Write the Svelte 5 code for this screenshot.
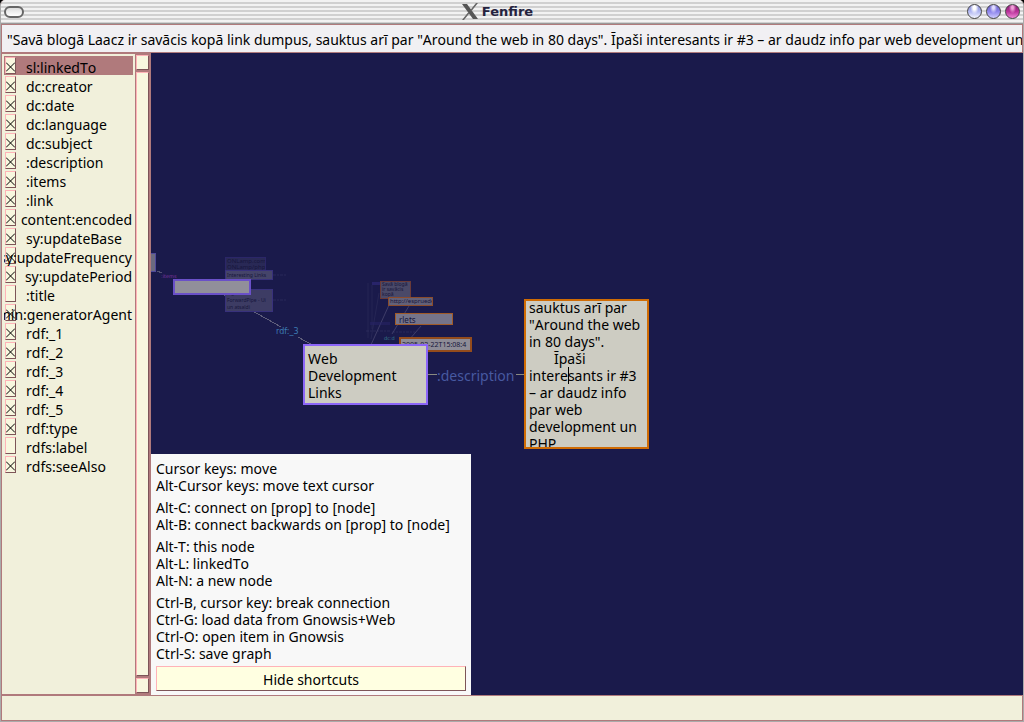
<script>
  const properties = [
    ['sl:linkedTo', true],
    ['dc:creator', true],
    ['dc:date', true],
    ['dc:language', true],
    ['dc:subject', true],
    [':description', true],
    [':items', true],
    [':link', true],
    ['content:encoded', true],
    ['sy:updateBase', true],
    ['sy:updateFrequency', true],
    ['sy:updatePeriod', true],
    [':title', false],
    ['admin:generatorAgent', true],
    ['rdf:_1', true],
    ['rdf:_2', true],
    ['rdf:_3', true],
    ['rdf:_4', true],
    ['rdf:_5', true],
    ['rdf:type', true],
    ['rdfs:label', false],
    ['rdfs:seeAlso', true]
  ];
  const shortcuts = [
    ['Cursor keys: move', 'Alt-Cursor keys: move text cursor'],
    ['Alt-C: connect on [prop] to [node]', 'Alt-B: connect backwards on [prop] to [node]'],
    ['Alt-T: this node', 'Alt-L: linkedTo', 'Alt-N: a new node'],
    [
      'Ctrl-B, cursor key: break connection',
      'Ctrl-G: load data from Gnowsis+Web',
      'Ctrl-O: open item in Gnowsis',
      'Ctrl-S: save graph'
    ]
  ];
  let selected = $state(0);
  let showShortcuts = $state(true);
  let text = $state(
    '"Savā blogā Laacz ir savācis kopā link dumpus, sauktus arī par "Around the web in 80 days". Īpaši interesants ir #3 – ar daudz info par web development un PHP'
  );
</script>

<div class="window">
  <header class="titlebar">
    <button class="menu" aria-label="Window menu"></button>
    <h1>
      <svg width="16" height="17" viewBox="0 0 16 17" aria-hidden="true">
        <path d="M0 1h5l11 15h-5z" fill="#555" />
        <path d="M16 0h-2L8.400 7l1 1.300zM0 17h2l5.600-7-1-1.300z" fill="#666" />
      </svg>
      <span>Fenfire</span>
    </h1>
    <div class="controls">
      <button class="orb pale" aria-label="Minimize"></button>
      <button class="orb blue" aria-label="Maximize"></button>
      <button class="orb pink" aria-label="Close"></button>
    </div>
  </header>

  <input class="content" type="text" aria-label="Node text" bind:value={text} />

  <main>
    <aside>
      <ul>
        {#each properties as [name, on], i}
          <li class:selected={i === selected}>
            <input id="prop-{i}" type="checkbox" checked={on} onfocus={() => (selected = i)} />
            <label for="prop-{i}"><span>{name}</span></label>
          </li>
        {/each}
      </ul>
      <div class="scroll">
        <button class="step" aria-label="Scroll up"></button>
        <div class="thumb"></div>
        <button class="step" aria-label="Scroll down"></button>
      </div>
    </aside>

    <section class="canvas">
      <svg class="links" width="520" height="400" aria-hidden="true">
        <g fill="none" stroke="#77758a" shape-rendering="crispEdges">
          <path d="M6 218l5 2M28 232l2 2" opacity=".6" />
          <path d="M70 240l60 34M147 284l16 9" opacity=".75" />
          <path d="M276 321h10M365 321h10" stroke="#8a8a80" />
        </g>
        <g fill="none" stroke="#56547c">
          <path d="M270 273l-12 14M258 253l-17 28M238 252l-19 42" opacity=".6" />
          <path d="M217 230v55M221 232v44M228 240l-8 46" opacity=".2" />
        </g>
        <g fill="#28246a">
          <path d="M221 229h10v3h-10z" />
          <path d="M219 269h20v3h-20z" opacity=".5" />
        </g>
        <g fill="none" stroke="#39376a" stroke-dasharray="3 1 2 1">
          <path d="M215 278h25M241 279h23M122 222h14M122 247h14" opacity=".5" />
        </g>
      </svg>

      <div class="node tiny sliver"></div>
      <div class="node tiny n1">ONLamp.com/<br />ONLamp/php</div>
      <div class="node tiny n3">Sigurd<br />ForwardPipe - Ui<br />un atsaldi</div>
      <div class="node tiny n2">Interesting Links</div>
      <div class="node blank"></div>
      <div class="edge items">:items</div>
      <div class="edge rdl">rdf:_3</div>
      <div class="node tiny f1">Savā blogā<br />ir savācis<br />kopā</div>
      <div class="node tiny f2">http://espruede</div>
      <div class="node tiny f3">rlets</div>
      <div class="node tiny f4">2005-02-22T15:08:4</div>
      <div class="edge date">dc:d</div>
      <div class="node web">Web<br />Development<br />Links</div>
      <div class="edge desc">:description</div>
      <div class="node focus">
        <p>
          sauktus arī par<br />"Around the web<br />in 80 days".<br />
          <span class="indent">Īpaši</span><br />intere<i class="caret"></i>sants ir #3<br />– ar daudz info<br />par web<br />development un<br />PHP
        </p>
      </div>

      {#if showShortcuts}
        <div class="shortcuts">
          <div class="groups">
            {#each shortcuts as group}
              <div>
                {#each group as line}<p>{line}</p>{/each}
              </div>
            {/each}
          </div>
          <button onclick={() => (showShortcuts = false)}>Hide shortcuts</button>
        </div>
      {/if}
    </section>
  </main>

  <footer></footer>
</div>

<style>
  :global(body) {
    margin: 0;
    background: #000;
  }
  .window,
  .window * {
    box-sizing: border-box;
  }
  .window {
    --rose: #b07a7c;
    --cream: #f1f0db;
    --light: #ffb3b8;
    --dark: #7d5558;
    display: flex;
    flex-direction: column;
    min-height: 100vh;
    border: 1px solid #aaa;
    border-top: 0;
    border-radius: 5px 5px 0 0;
    overflow: hidden;
    background: var(--rose);
    font: 14px/17px 'Noto Sans', sans-serif;
    font-kerning: none;
    color: #000;
  }
  p {
    margin: 0;
  }
  button,
  .content {
    margin: 0;
    padding: 0;
    font: inherit;
    color: inherit;
    border-radius: 0;
  }
  .titlebar {
    flex: none;
    display: flex;
    align-items: center;
    height: 24px;
    padding: 0 3px;
    border-bottom: 1px solid #999;
    background: repeating-linear-gradient(#f2f2f2 0 2px, #d0d0d0 2px 4px);
  }
  .menu {
    width: 20px;
    height: 12px;
    border: 2px solid #666;
    border-radius: 6px;
    background: linear-gradient(#ddd, #fff);
  }
  h1 {
    flex: 1;
    display: flex;
    align-items: center;
    justify-content: center;
    gap: 4px;
    margin: 0;
    padding-left: 4px;
    font: bold 13px/16px 'DejaVu Sans', sans-serif;
    color: #25233f;
  }
  .controls {
    display: flex;
    gap: 4px;
  }
  .orb {
    width: 15px;
    height: 15px;
    border: 1px solid #444;
    border-radius: 50%;
  }
  .pale {
    background: radial-gradient(ellipse at 50% 20%, #fff 15%, transparent 45%), linear-gradient(#8890d4, #b0b6f2 50%, #f4f6ff);
  }
  .blue {
    background: radial-gradient(ellipse at 50% 20%, #e0dcff 10%, transparent 40%), linear-gradient(#6a60c4, #8c84ec 50%, #cfccff);
  }
  .pink {
    background: radial-gradient(ellipse at 50% 20%, #f0a0d8 10%, transparent 40%), linear-gradient(#8a1c74, #b83098 50%, #f088d8);
  }
  .content {
    flex: none;
    width: 100%;
    height: 29px;
    padding: 2px 0 0 5px;
    border: 1px solid var(--rose);
    background: #f1f0f3;
    outline: 0;
  }
  main {
    flex: 1;
    display: flex;
  }
  aside {
    flex: none;
    display: flex;
    width: 150px;
    padding: 1px;
  }
  ul {
    flex: 1;
    min-width: 0;
    margin: 0;
    padding: 2px;
    overflow: hidden;
    list-style: none;
    background: var(--cream);
  }
  li {
    display: flex;
    align-items: center;
    height: 19px;
    padding: 0 1px;
    overflow-x: clip;
  }
  li.selected {
    background: var(--rose);
  }
  li input {
    appearance: none;
    flex: none;
    width: 11px;
    height: 17px;
    margin: 0;
    border: 1px solid var(--light);
    border-right-color: var(--dark);
    border-bottom-color: var(--dark);
    background: #f8f7df;
  }
  li input:checked {
    background: #f8f7df
      url("data:image/svg+xml,%3Csvg xmlns='http://www.w3.org/2000/svg' width='9' height='10'%3E%3Cpath d='M0 .5l9 9M9 .5l-9 9' stroke='%23000'/%3E%3C/svg%3E")
      0 4px / 9px 10px no-repeat;
  }
  label {
    flex: 1;
    min-width: 0;
    display: flex;
    justify-content: flex-end;
    margin-left: 10px;
    line-height: 19px;
    padding-top: 3px;
    white-space: nowrap;
  }
  label span {
    flex: none;
    margin-right: auto;
  }
  .scroll {
    flex: none;
    display: flex;
    flex-direction: column;
    gap: 2px;
    width: 15px;
    padding: 1px;
    background: var(--rose);
  }
  .step,
  .thumb {
    border: 1px solid var(--light);
    border-right-color: var(--dark);
    border-bottom-color: var(--dark);
    background: #f8f7df;
  }
  .step {
    flex: none;
    height: 15px;
  }
  .thumb {
    flex: 1;
  }
  .canvas {
    flex: 1;
    position: relative;
    min-width: 0;
    overflow: hidden;
    background: #1a1a4b;
  }
  .links {
    position: absolute;
    left: 0;
    top: 0;
  }
  .node,
  .edge {
    position: absolute;
    white-space: nowrap;
  }
  .node {
    border: 1px solid;
    overflow: hidden;
  }
  .tiny {
    padding-left: 1px;
    font: 6px/7px 'Noto Sans', sans-serif;
    color: #17163c;
  }
  .sliver {
    left: -4px;
    top: 200px;
    width: 9px;
    height: 19px;
    border-color: #504a9c;
    background: #6b6a80;
  }
  .n1 {
    left: 74px;
    top: 204px;
    width: 41px;
    height: 14px;
    border-color: #2b2668;
    background: #292956;
    line-height: 6px;
  }
  .n2 {
    left: 74px;
    top: 217px;
    width: 48px;
    height: 10px;
    border-color: #38317c;
    background: #454469;
    font-size: 5px;
    line-height: 8px;
  }
  .n3 {
    left: 74px;
    top: 236px;
    width: 48px;
    height: 23px;
    border-color: #38317c;
    background: #3d3c64;
    font-size: 5px;
  }
  .blank {
    left: 22px;
    top: 226px;
    width: 78px;
    height: 16px;
    border: 2px solid #6a50c8;
    background: #918f9a;
  }
  .edge {
    font: 6px/8px 'DejaVu Sans', sans-serif;
  }
  .items {
    left: 10px;
    top: 219px;
    font-size: 5px;
    color: #8034a0;
  }
  .rdl {
    left: 125px;
    top: 273px;
    font-size: 8px;
    line-height: 12px;
    color: #3d7cb4;
  }
  .date {
    left: 233px;
    top: 281px;
    font-size: 5px;
    color: #367b8c;
  }
  .f1 {
    left: 229px;
    top: 228px;
    width: 31px;
    height: 18px;
    border-color: #6a3a38;
    background: #4a4968;
    font-size: 5px;
    line-height: 5px;
  }
  .f2 {
    left: 237px;
    top: 244px;
    width: 45px;
    height: 9px;
    border-color: #8a4c2c;
    background: #636179;
  }
  .f3 {
    left: 244px;
    top: 260px;
    width: 58px;
    height: 12px;
    padding-left: 3px;
    border-color: #a05a28;
    background: #75748a;
    font-size: 8px;
    line-height: 12px;
  }
  .f4 {
    left: 248px;
    top: 284px;
    width: 73px;
    height: 15px;
    border: 2px solid #944c1c;
    background: #8e8c96;
    font-size: 7px;
    line-height: 12px;
  }
  .web {
    left: 152px;
    top: 291px;
    width: 125px;
    height: 61px;
    padding: 4px 3px;
    border: 2px solid #8c66f8;
    background: #cdccc2;
  }
  .desc {
    left: 286px;
    top: 314px;
    font: inherit;
    color: #4759a0;
  }
  .focus {
    left: 373px;
    top: 246px;
    width: 125px;
    height: 150px;
    padding: 0 3px;
    border: 2px solid #d06c04;
    background: #cdccc2;
  }
  .focus p {
    margin-top: -2px;
  }
  .indent {
    padding-left: 25px;
  }
  .caret {
    position: absolute;
    width: 1px;
    height: 17px;
    background: #000;
  }
  .shortcuts {
    position: absolute;
    left: 0;
    bottom: 0;
    width: 320px;
    padding: 6px 5px 4px;
    background: #f8f8f8;
    white-space: nowrap;
  }
  .groups {
    display: flex;
    flex-direction: column;
    gap: 5px;
    margin-bottom: 4px;
  }
  .shortcuts button {
    display: block;
    width: 100%;
    height: 25px;
    padding-top: 2px;
    border: 1px solid var(--light);
    border-right-color: var(--dark);
    border-bottom-color: var(--dark);
    background: #ffffe1;
  }
  footer {
    flex: none;
    height: 26px;
    border: 1px solid var(--rose);
    background: var(--cream);
  }
</style>
